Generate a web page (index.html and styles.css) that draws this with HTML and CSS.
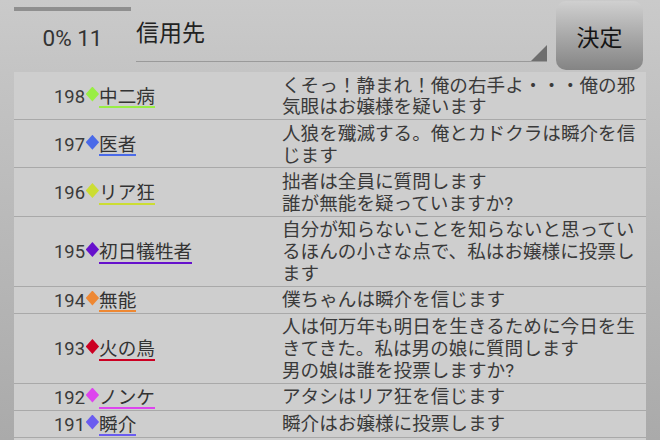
FILE: index.html
```html
<!DOCTYPE html>
<html lang="ja">
<head>
<meta charset="utf-8">
<title>投票</title>
<link rel="stylesheet" href="styles.css">
</head>
<body>
<div class="header">
  <div class="progress">
    <div class="bar"></div>
    <div class="pct">0% 11</div>
  </div>
  <div class="spinner"><span class="spinner-text">信用先</span></div>
  <button class="decide">決定</button>
</div>
<div class="list">
  <div class="row">
    <div class="who"><span class="tag"><span class="no">198</span><span class="dia lime"></span><span class="name lime">中二病</span></span></div>
    <div class="msg">くそっ！静まれ！俺の右手よ・・・俺の邪気眼はお嬢様を疑います</div>
  </div>
  <div class="row">
    <div class="who"><span class="tag"><span class="no">197</span><span class="dia blue"></span><span class="name blue">医者</span></span></div>
    <div class="msg">人狼を殲滅する。俺とカドクラは瞬介を信じます</div>
  </div>
  <div class="row">
    <div class="who"><span class="tag"><span class="no">196</span><span class="dia olive"></span><span class="name olive">リア狂</span></span></div>
    <div class="msg">拙者は全員に質問します<br>誰が無能を疑っていますか?</div>
  </div>
  <div class="row">
    <div class="who"><span class="tag"><span class="no">195</span><span class="dia purple"></span><span class="name purple">初日犠牲者</span></span></div>
    <div class="msg">自分が知らないことを知らないと思っているほんの小さな点で、私はお嬢様に投票します</div>
  </div>
  <div class="row">
    <div class="who"><span class="tag"><span class="no">194</span><span class="dia orange"></span><span class="name orange">無能</span></span></div>
    <div class="msg">僕ちゃんは瞬介を信じます</div>
  </div>
  <div class="row">
    <div class="who"><span class="tag"><span class="no">193</span><span class="dia crimson"></span><span class="name crimson">火の鳥</span></span></div>
    <div class="msg">人は何万年も明日を生きるために今日を生きてきた。私は男の娘に質問します<br>男の娘は誰を投票しますか?</div>
  </div>
  <div class="row">
    <div class="who"><span class="tag"><span class="no">192</span><span class="dia magenta"></span><span class="name magenta">ノンケ</span></span></div>
    <div class="msg">アタシはリア狂を信じます</div>
  </div>
  <div class="row">
    <div class="who"><span class="tag"><span class="no">191</span><span class="dia violet"></span><span class="name violet">瞬介</span></span></div>
    <div class="msg">瞬介はお嬢様に投票します</div>
  </div>
  <div class="row row-empty"></div>
</div>
</body>
</html>
```

FILE: styles.css
```css
html, body {
  margin: 0;
  padding: 0;
}
body {
  width: 660px;
  height: 440px;
  overflow: hidden;
  background: linear-gradient(to bottom, #cacaca 0px, #c4c4c4 72px, #aaaaaa 440px);
  font-family: Roboto, "Noto Sans CJK JP", sans-serif;
  color: #333;
}

/* header */
.header {
  display: flex;
  align-items: flex-start;
  height: 72px;
  padding-left: 14px;
  box-sizing: border-box;
}
.progress {
  width: 117px;
  display: flex;
  flex-direction: column;
}
.bar {
  height: 4px;
  margin-top: 7px;
  background: #8f8f8f;
}
.pct {
  margin-top: 14px;
  line-height: 26px;
  font-size: 22.5px;
  text-align: center;
  color: #333;
}
.spinner {
  position: relative;
  margin-left: 5px;
  width: 411px;
  height: 62px;
  box-sizing: border-box;
  padding-top: 16px;
  border-bottom: 1px solid #9a9a9a;
}
.spinner-text {
  font-family: "Noto Sans CJK JP", sans-serif;
  font-size: 23px;
  line-height: 30px;
  color: #222;
}
.spinner::after {
  content: "";
  position: absolute;
  right: 0;
  bottom: 0;
  width: 16px;
  height: 16px;
  background: #6e6e6e;
  clip-path: polygon(100% 0, 100% 100%, 0 100%);
}
.decide {
  margin: 1px 0 0 9px;
  width: 87px;
  height: 69px;
  border: none;
  border-radius: 10px;
  padding: 0;
  background: linear-gradient(to bottom, #d0d0d0 0%, #a9a9a9 50%, #848484 100%);
  font-family: "Noto Sans CJK JP", sans-serif;
  font-size: 23px;
  color: #151515;
}

/* list */
.list {
  margin: 0 14px;
  background: #cecece;
}
.row {
  display: grid;
  grid-template-columns: 268px 1fr;
  border-bottom: 1px solid #a9a9a9;
}
.row-empty {
  height: 26px;
  border-bottom: none;
}
.who {
  display: flex;
  align-items: center;
  padding-left: 40px;
  padding-top: 3px;
}
.tag {
  line-height: 22px;
  white-space: nowrap;
}
.no {
  font-size: 18.4px;
  color: #3a3a3a;
}
.dia {
  display: inline-block;
  width: 13.4px;
  height: 15px;
  margin: 0 0 0 0.7px;
  vertical-align: 1px;
  clip-path: polygon(50% 0, 100% 50%, 50% 100%, 0 50%);
  background: var(--c);
}
.name {
  display: inline-block;
  font-family: "Noto Sans CJK JP", sans-serif;
  font-size: 18.6px;
  line-height: 1;
  padding-bottom: 2px;
  border-bottom: 2px solid var(--c);
  color: #333;
}
.msg {
  font-family: Roboto, "Noto Sans CJK JP", sans-serif;
  font-size: 18.6px;
  line-height: 21.8px;
  padding: 3.6px 0 0;
  color: #3a3a3a;
}

.lime { --c: #99ee44; }
.blue { --c: #4a6ae8; }
.olive { --c: #ccdd33; }
.purple { --c: #6611cc; }
.orange { --c: #ee8833; }
.crimson { --c: #cc0022; }
.magenta { --c: #dd44ee; }
.violet { --c: #6a5cf0; }
```
